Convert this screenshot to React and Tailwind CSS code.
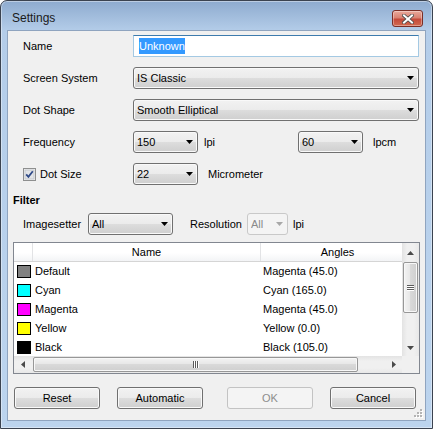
import React from 'react';

const BTN_BG =
  'bg-[linear-gradient(to_bottom,#f2f2f2_0%,#ebebeb_50%,#dddddd_50%,#cfcfcf_100%)]';

const rows = [
  { name: 'Default', color: '#808080', angle: 'Magenta (45.0)' },
  { name: 'Cyan', color: '#00ffff', angle: 'Cyan (165.0)' },
  { name: 'Magenta', color: '#ff00ff', angle: 'Magenta (45.0)' },
  { name: 'Yellow', color: '#ffff00', angle: 'Yellow (0.0)' },
  { name: 'Black', color: '#000000', angle: 'Black (105.0)' },
];

function Arrow({ dir = 'down', color = '#000' }) {
  const paths = {
    down: 'M0 0h7L3.5 4z',
    up: 'M0 4h7L3.5 0z',
  };
  if (dir === 'left' || dir === 'right') {
    return (
      <svg width="4" height="7" viewBox="0 0 4 7">
        <path d={dir === 'left' ? 'M4 0v7L0 3.5z' : 'M0 0v7L4 3.5z'} fill={color} />
      </svg>
    );
  }
  return (
    <svg width="7" height="4" viewBox="0 0 7 4">
      <path d={paths[dir]} fill={color} />
    </svg>
  );
}

function Combo({ value, w, disabled }) {
  return (
    <div
      className={`${w} h-[22px] shrink-0 flex items-center rounded-[3px] border pl-[3px] pr-[4px] ${
        disabled
          ? 'border-[#c9c9c9] bg-[#f4f4f4] text-[#8a8a8a]'
          : `border-[#707070] ${BTN_BG} text-black shadow-[inset_0_0_0_1px_#f9f9f9]`
      }`}
    >
      <span className="flex-1 truncate">{value}</span>
      <Arrow color={disabled ? '#a8a8a8' : '#000'} />
    </div>
  );
}

function Button({ label, disabled, className = '' }) {
  return (
    <div
      className={`w-[86px] h-[22px] shrink-0 flex items-center justify-center rounded-[3px] border ${
        disabled
          ? 'border-[#c3c3c3] bg-[#f4f4f4] text-[#8d8d8d]'
          : `border-[#707070] ${BTN_BG} text-black shadow-[inset_0_0_0_1px_#f9f9f9]`
      } ${className}`}
    >
      {label}
    </div>
  );
}

function Row({ label, children }) {
  return (
    <div className="flex items-center h-[22px] pl-[15px]">
      <span className="w-[110px] shrink-0">{label}</span>
      {children}
    </div>
  );
}

function CloseButton() {
  return (
    <div className="ml-auto mt-[9px] mr-[9px] w-[31px] h-[17px] rounded-[3px] border border-[#7a2e26] bg-[linear-gradient(to_bottom,#e9a99c_0%,#d98272_45%,#c44a3a_55%,#d26a50_100%)] shadow-[inset_0_0_0_1px_rgba(255,255,255,0.35)] flex items-center justify-center">
      <svg width="12" height="10" viewBox="0 0 12 10">
        <path d="M2 1.5l8 7M10 1.5l-8 7" stroke="#4a4a4a" strokeWidth="3.6" strokeLinecap="square" />
        <path d="M2 1.5l8 7M10 1.5l-8 7" stroke="#ffffff" strokeWidth="2" strokeLinecap="square" />
      </svg>
    </div>
  );
}

function Checkbox() {
  return (
    <svg width="13" height="13" viewBox="0 0 13 13" className="shrink-0">
      <rect x="0.5" y="0.5" width="12" height="12" fill="#f4f4f4" stroke="#8e8f8f" />
      <rect x="2" y="2" width="9" height="9" fill="#e2e4e7" stroke="#c4c8cd" strokeWidth="1" />
      <path d="M3.2 6.4L5.4 8.8L9.8 3.2" fill="none" stroke="#2f4a88" strokeWidth="1.8" />
    </svg>
  );
}

function Grip({ vertical }) {
  return (
    <svg width={vertical ? 7 : 6} height={vertical ? 6 : 7} viewBox={vertical ? '0 0 7 6' : '0 0 6 7'}>
      {vertical ? (
        <>
          <path d="M0 0.5h7M0 2.5h7M0 4.5h7" stroke="#5b5b5b" strokeWidth="1" />
          <path d="M0 1.5h7M0 3.5h7M0 5.5h7" stroke="#ffffff" strokeWidth="1" />
        </>
      ) : (
        <>
          <path d="M0.5 0v7M2.5 0v7M4.5 0v7" stroke="#5b5b5b" strokeWidth="1" />
          <path d="M1.5 0v7M3.5 0v7M5.5 0v7" stroke="#ffffff" strokeWidth="1" />
        </>
      )}
    </svg>
  );
}

function SizeGrip() {
  const dots = [
    [6, 0],
    [3, 3],
    [6, 3],
    [0, 6],
    [3, 6],
    [6, 6],
  ];
  return (
    <svg width="9" height="9" viewBox="0 0 9 9" className="absolute right-[2px] bottom-[2px]">
      {dots.map(([x, y]) => (
        <g key={`${x}-${y}`}>
          <rect x={x + 1} y={y + 1} width="2" height="2" fill="#ffffff" />
          <rect x={x} y={y} width="2" height="2" fill="#b4b4b4" />
        </g>
      ))}
    </svg>
  );
}

function DataList() {
  return (
    <div className="mx-[5px] mt-[7px] h-[132px] border border-[#828790] bg-white flex flex-col">
      <div className="flex flex-1 min-h-0">
        <div className="flex-1 min-w-0 flex flex-col overflow-hidden">
          <div className="flex h-[19px] shrink-0 border-b border-[#d5d5d5] bg-[linear-gradient(to_bottom,#ffffff_0%,#ffffff_55%,#f3f4f6_100%)]">
            <div className="w-[19px] shrink-0 border-r border-[#e2e3e5]" />
            <div className="w-[228px] shrink-0 border-r border-[#e2e3e5] flex items-center justify-center">
              Name
            </div>
            <div className="flex-1 flex items-center justify-center pl-[12px]">Angles</div>
          </div>
          {rows.map((r) => (
            <div key={r.name} className="flex h-[19px] shrink-0 items-center">
              <div className="w-[19px] shrink-0 pl-[3px]">
                <div className="w-[14px] h-[13px] border border-black" style={{ backgroundColor: r.color }} />
              </div>
              <div className="w-[228px] shrink-0 pl-[2px]">{r.name}</div>
              <div className="flex-1 pl-[2px]">{r.angle}</div>
            </div>
          ))}
        </div>
        <div className="w-[17px] shrink-0 flex flex-col items-center bg-[linear-gradient(to_right,#e3e3e3_0%,#f0f0f0_30%,#f0f0f0_70%,#e8e8e8_100%)]">
          <div className="h-[17px] w-full shrink-0 flex items-center justify-center pt-[2px]">
            <Arrow dir="up" color="#4a4a4a" />
          </div>
          <div className="mt-[2px] w-[15px] h-[51px] shrink-0 rounded-[2px] border border-[#979797] bg-[linear-gradient(to_right,#f3f3f3_0%,#e6e6e6_50%,#d9d9d9_50%,#cfcfcf_100%)] shadow-[inset_0_0_0_1px_#f8f8f8] flex items-center justify-center">
            <Grip vertical />
          </div>
          <div className="flex-1" />
          <div className="h-[17px] w-full shrink-0 flex items-center justify-center">
            <Arrow dir="down" color="#4a4a4a" />
          </div>
        </div>
      </div>
      <div className="flex h-[17px] shrink-0">
        <div className="flex-1 flex items-center bg-[linear-gradient(to_bottom,#e3e3e3_0%,#f0f0f0_30%,#f0f0f0_70%,#e8e8e8_100%)]">
          <div className="w-[17px] h-full shrink-0 flex items-center justify-center">
            <Arrow dir="left" color="#4a4a4a" />
          </div>
          <div className="ml-[2px] w-[325px] h-[15px] shrink-0 rounded-[2px] border border-[#979797] bg-[linear-gradient(to_bottom,#f3f3f3_0%,#e6e6e6_50%,#d9d9d9_50%,#cfcfcf_100%)] shadow-[inset_0_0_0_1px_#f8f8f8] flex items-center justify-center">
            <Grip />
          </div>
          <div className="flex-1" />
          <div className="w-[17px] h-full shrink-0 flex items-center justify-center">
            <Arrow dir="right" color="#4a4a4a" />
          </div>
        </div>
        <div className="w-[17px] shrink-0 bg-[#f0f0f0]" />
      </div>
    </div>
  );
}

export default function App() {
  return (
    <div className="w-[433px] h-[429px] overflow-hidden rounded-t-[7px] border border-[#3b4350] bg-[linear-gradient(to_bottom,#8eabcf_0px,#b4cde9_30px,#bcd4ee_100%)] shadow-[inset_0_0_0_1px_rgba(255,255,255,0.4)] flex flex-col font-['Liberation_Sans',Arial,sans-serif] text-[11px] leading-[13px] text-black select-none">
      <div className="flex items-start h-[29px] shrink-0">
        <span className="ml-[11px] mt-[10px] text-[12px] leading-[14px] text-[#1a1a1a]">Settings</span>
        <CloseButton />
      </div>
      <div className="relative mx-[6px] h-[391px] shrink-0 border border-[#8fa4bf] bg-[#f0f0f0] flex flex-col pt-[4px]">
        <Row label="Name">
          <div className="w-[286px] h-[22px] border border-[#a4c9e3] border-t-[#3d7bad] bg-white flex items-center pl-[5px]">
            <span className="bg-[#3399ff] text-white leading-[16px] inline-block">Unknown</span>
          </div>
        </Row>
        <div className="mt-[10px]">
          <Row label="Screen System">
            <Combo w="w-[286px]" value="IS Classic" />
          </Row>
        </div>
        <div className="mt-[10px]">
          <Row label="Dot Shape">
            <Combo w="w-[286px]" value="Smooth Elliptical" />
          </Row>
        </div>
        <div className="mt-[10px]">
          <Row label="Frequency">
            <Combo w="w-[65px]" value="150" />
            <span className="ml-[6px] w-[94px] shrink-0">lpi</span>
            <Combo w="w-[65px]" value="60" />
            <span className="ml-[10px]">lpcm</span>
          </Row>
        </div>
        <div className="mt-[10px] flex items-center h-[22px] pl-[15px]">
          <div className="w-[110px] shrink-0 flex items-center">
            <Checkbox />
            <span className="ml-[4px]">Dot Size</span>
          </div>
          <Combo w="w-[65px]" value="22" />
          <span className="ml-[10px]">Micrometer</span>
        </div>
        <div className="mt-[9px] h-[13px] pl-[5px] font-bold">Filter</div>
        <div className="mt-[6px] flex items-center h-[22px] pl-[15px]">
          <span className="w-[65px] shrink-0">Imagesetter</span>
          <Combo w="w-[85px]" value="All" />
          <span className="ml-[17px] w-[57px] shrink-0">Resolution</span>
          <Combo w="w-[41px]" value="All" disabled />
          <span className="ml-[5px]">lpi</span>
        </div>
        <DataList />
        <div className="mt-[13px] flex">
          <Button label="Reset" className="ml-[6px]" />
          <Button label="Automatic" className="ml-[17px]" />
          <Button label="OK" disabled className="ml-[24px]" />
          <Button label="Cancel" className="ml-[17px]" />
        </div>
        <SizeGrip />
      </div>
    </div>
  );
}
